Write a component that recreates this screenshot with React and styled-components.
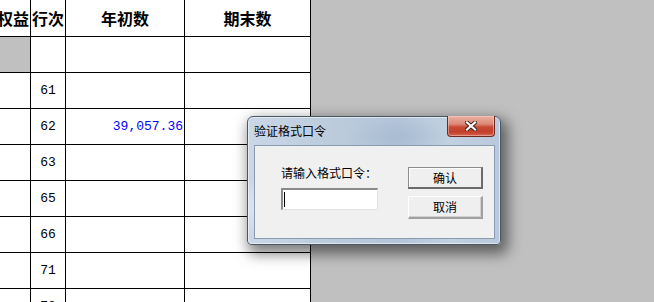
import React from "react";
import styled, { createGlobalStyle } from "styled-components";

const GlobalStyle = createGlobalStyle`
  html, body {
    margin: 0;
    padding: 0;
    background: #c0c0c0;
    overflow: hidden;
  }
  body {
    font-family: "Noto Sans CJK SC", "Liberation Sans", sans-serif;
  }
`;

const Page = styled.div`
  position: relative;
  width: 654px;
  height: 302px;
  overflow: hidden;
  background: #c0c0c0;
  display: flex;
  align-items: flex-start;
`;

const Sheet = styled.div`
  display: grid;
  grid-template-columns: 31px 35px 119px 126px;
  grid-template-rows: 37px;
  grid-auto-rows: 36px;
  background: #ffffff;
`;

const Cell = styled.div`
  box-sizing: border-box;
  border-right: 1px solid #000;
  border-bottom: 1px solid #000;
  background: ${(p) => (p.$shade ? "#c0c0c0" : "#ffffff")};
  display: flex;
  align-items: center;
  overflow: hidden;
  white-space: nowrap;
  justify-content: ${(p) =>
    p.$align === "right" ? "flex-end" : p.$align === "center" ? "center" : "flex-start"};
  padding-right: ${(p) => (p.$align === "right" ? "1px" : "0")};
`;

const HeadText = styled.span`
  font-family: "Noto Sans CJK SC", sans-serif;
  font-weight: 700;
  font-size: 16px;
  line-height: 18px;
  color: #000;
`;

const NumText = styled.span`
  font-family: "Liberation Mono", monospace;
  font-size: 13px;
  line-height: 16px;
  color: ${(p) => (p.$blue ? "#0000ff" : "#000000")};
`;

const Dialog = styled.div`
  position: absolute;
  left: 247px;
  top: 116px;
  width: 254px;
  height: 129px;
  box-sizing: border-box;
  border: 1px solid #4a5866;
  border-radius: 6px 6px 4px 4px;
  background:
    radial-gradient(ellipse 40px 30px at 20px 90px, rgba(235, 243, 252, 0.7), transparent),
    radial-gradient(ellipse 50px 20px at 150px 20px, rgba(160, 182, 206, 0.6), transparent),
    linear-gradient(90deg, #c9d7e7 0%, #bccbdc 35%, #b3c5d9 60%, #c2d1e1 80%, #b9c9db 100%);
  box-shadow:
    inset 0 0 0 1px rgba(255, 255, 255, 0.5),
    4px 6px 14px 3px rgba(0, 0, 0, 0.5);
  padding: 0 5px 5px 6px;
  display: flex;
  flex-direction: column;
`;

const TitleBar = styled.div`
  height: 28px;
  display: flex;
  align-items: flex-start;
  justify-content: space-between;
`;

const Title = styled.span`
  font-size: 12px;
  line-height: 16px;
  margin-top: 6px;
  color: #000;
`;

const CloseButton = styled.div`
  width: 48px;
  height: 21px;
  margin-top: -1px;
  box-sizing: border-box;
  border: 1px solid #6e2a21;
  border-top: none;
  border-radius: 0 0 4px 4px;
  background: linear-gradient(
    180deg,
    #e9b0a3 0%,
    #dd8a78 40%,
    #c84a35 55%,
    #c33f2a 80%,
    #d66a52 100%
  );
  box-shadow: inset 0 0 0 1px rgba(255, 220, 210, 0.45);
  display: flex;
  align-items: center;
  justify-content: center;
`;

const Client = styled.div`
  flex: 1;
  box-sizing: border-box;
  background: #f0f0f0;
  border: 1px solid #8a9bb0;
  display: flex;
  align-items: flex-start;
  padding-left: 26px;
`;

const LeftCol = styled.div`
  display: flex;
  flex-direction: column;
  gap: 7px;
  padding-top: 19px;
`;

const Label = styled.span`
  font-size: 12px;
  line-height: 16px;
  color: #000;
`;

const Field = styled.div`
  width: 97px;
  height: 22px;
  box-sizing: border-box;
  background: #ffffff;
  border-style: solid;
  border-width: 2px 1px 1px 2px;
  border-color: #8a8a8a #e3e3e3 #e3e3e3 #8a8a8a;
  display: flex;
  align-items: center;
  padding-left: 1px;
`;

const Caret = styled.span`
  width: 1px;
  height: 15px;
  background: #000;
`;

const RightCol = styled.div`
  display: flex;
  flex-direction: column;
  gap: 7px;
  margin-left: 30px;
  padding-top: 21px;
`;

const Button = styled.div`
  width: 75px;
  height: ${(p) => (p.$default ? "22px" : "23px")};
  box-sizing: border-box;
  background: #efefef;
  border-style: solid;
  border-width: 1px 2px 2px 1px;
  border-color: ${(p) =>
    p.$default
      ? "#8c8c8c #6a6a6a #6a6a6a #8c8c8c"
      : "#ffffff #a0a0a0 #a0a0a0 #ffffff"};
  box-shadow: ${(p) =>
    p.$default ? "inset 1px 1px 0 #ffffff" : "inset -1px -1px 0 #d0d0d0"};
  display: flex;
  align-items: center;
  justify-content: center;
  font-size: 12px;
  line-height: 16px;
  color: #000;
`;

const header = ["权益", "行次", "年初数", "期末数"];
const rows = [
  { no: "", shade: true },
  { no: "61" },
  { no: "62", a: "39,057.36", b: "3,905.36" },
  { no: "63" },
  { no: "65" },
  { no: "66" },
  { no: "71" },
  { no: "72" },
];

export default function App() {
  return (
    <>
      <GlobalStyle />
      <Page>
        <Sheet>
          <Cell $align="right">
            <HeadText>{header[0]}</HeadText>
          </Cell>
          <Cell $align="center">
            <HeadText>{header[1]}</HeadText>
          </Cell>
          <Cell $align="center">
            <HeadText>{header[2]}</HeadText>
          </Cell>
          <Cell $align="center">
            <HeadText>{header[3]}</HeadText>
          </Cell>
          {rows.map((r, i) => (
            <React.Fragment key={i}>
              <Cell $shade={r.shade} />
              <Cell $align="center">
                <NumText>{r.no}</NumText>
              </Cell>
              <Cell $align="right">
                {r.a && <NumText $blue>{r.a}</NumText>}
              </Cell>
              <Cell $align="right">
                {r.b && <NumText $blue>{r.b}</NumText>}
              </Cell>
            </React.Fragment>
          ))}
        </Sheet>
        <Dialog>
          <TitleBar>
            <Title>验证格式口令</Title>
            <CloseButton>
              <svg width="12" height="10" viewBox="0 0 12 10">
                <path
                  d="M2 1.5 L10 8.5 M10 1.5 L2 8.5"
                  stroke="#3b1f1a"
                  strokeWidth="4"
                  strokeLinecap="square"
                />
                <path
                  d="M2 1.5 L10 8.5 M10 1.5 L2 8.5"
                  stroke="#ffffff"
                  strokeWidth="2.2"
                  strokeLinecap="square"
                />
              </svg>
            </CloseButton>
          </TitleBar>
          <Client>
            <LeftCol>
              <Label>请输入格式口令：</Label>
              <Field>
                <Caret />
              </Field>
            </LeftCol>
            <RightCol>
              <Button $default>确认</Button>
              <Button>取消</Button>
            </RightCol>
          </Client>
        </Dialog>
      </Page>
    </>
  );
}
